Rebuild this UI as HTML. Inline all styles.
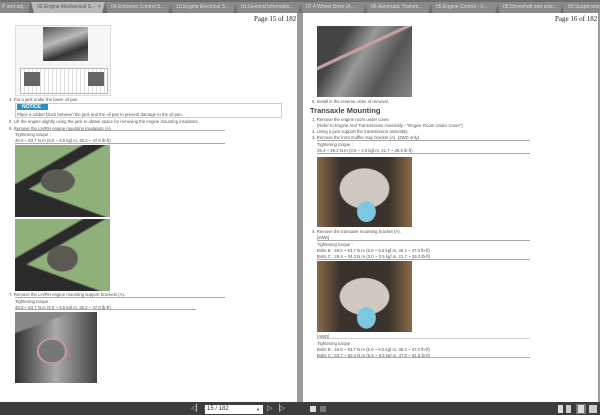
<!DOCTYPE html>
<html><head><meta charset="utf-8"><style>
*{margin:0;padding:0;box-sizing:border-box}
body{width:600px;height:415px;overflow:hidden;background:#9c9c9c;font-family:"Liberation Sans",sans-serif;position:relative}
.a{position:absolute}
.tabs{left:0;top:0;width:600px;height:13px;background:#6e6e6e}
.tab{position:absolute;top:2px;height:11px;background:#8a8a8a;color:#dcdcdc;font-size:5px;line-height:11px;padding-left:6px;white-space:nowrap;overflow:hidden;clip-path:polygon(0 0,100% 0,96% 100%,4% 100%)}
.tab.act{background:#b9b9b9;color:#555}
.page{background:#fff;top:13px;height:389px}
.t{position:absolute;font-size:4.3px;color:#555;white-space:nowrap;line-height:5px}
.pn{position:absolute;font-family:"Liberation Serif",serif;font-size:7px;color:#222;white-space:nowrap}
.ln{position:absolute;height:1px;background:#aaa}
.ph{position:absolute}
.bar{left:0;top:402px;width:600px;height:13px;background:#3d3d3d}
</style></head><body>
<div class="a tabs">
<div class="tab" style="left:-4px;width:34px">P and adj...</div>
<div class="tab act" style="left:31px;width:74px">02.Engine Mechanical S... &nbsp;×</div>
<div class="tab" style="left:105px;width:66px">04.Emission Control S...</div>
<div class="tab" style="left:170px;width:66px">10.Engine Electrical S...</div>
<div class="tab" style="left:235px;width:66px">01.General Informatio...</div>
<div class="tab" style="left:300px;width:66px">07.4 Wheel Drive (A...</div>
<div class="tab" style="left:365px;width:66px">06.Automatic Transm...</div>
<div class="tab" style="left:430px;width:68px">05.Engine Control - F...</div>
<div class="tab" style="left:497px;width:66px">08.Driveshaft and axle...</div>
<div class="tab" style="left:562px;width:44px">09.Suspension</div>
</div>

<div class="a page" style="left:0;width:297px">
<div class="pn" style="left:254px;top:2px">Page 15 of 182</div>
<div class="ph" style="left:15px;top:12px;width:96px;height:71px;border:1px solid #ddd;background:#f6f6f6">
 <div class="a" style="left:27px;top:1px;width:45px;height:34px;background:linear-gradient(160deg,#555,#bbb 40%,#333 70%,#777)"></div>
 <div class="a" style="left:4px;top:42px;width:88px;height:26px;border:1px solid #bbb;background:repeating-linear-gradient(90deg,#fff 0 3px,#ddd 3px 4px)"></div>
 <div class="a" style="left:8px;top:46px;width:16px;height:14px;background:#666"></div>
 <div class="a" style="left:72px;top:46px;width:16px;height:14px;background:#666"></div>
</div>
<div class="t" style="left:9px;top:84px">4. Put a jack under the lower oil pan.</div>
<div class="a" style="left:15px;top:90px;width:267px;height:15px;border:1px solid #ccc"></div>
<div class="a" style="left:17px;top:91px;width:31px;height:6px;background:#2f8fc4;color:#fff;font-size:5px;line-height:6px;font-weight:bold;padding-left:5px">NOTICE</div>
<div class="t" style="left:17px;top:99px">Place a rubber block between the jack and the oil pan to prevent damage to the oil pan.</div>
<div class="t" style="left:9px;top:106px">5. Lift the engine slightly using the jack to obtain space for removing the engine mounting insulators.</div>
<div class="t" style="left:9px;top:113px">6. Remove the LH/RH engine mounting insulators (A).</div>
<div class="ln" style="left:15px;top:117px;width:210px"></div>
<div class="t" style="left:15px;top:119px">Tightening torque :</div>
<div class="t" style="left:15px;top:125px">49.0 ~ 63.7 N.m (5.0 ~ 6.5 kgf.m, 36.2 ~ 47.0 lb-ft)</div>
<div class="ln" style="left:15px;top:130px;width:210px"></div>
<div class="ph" style="left:15px;top:132px;width:95px;height:72px;background:radial-gradient(ellipse at 45% 50%,#5a5a52 0 22%,transparent 24%),linear-gradient(150deg,transparent 30%,#2a2a2a 32% 40%,transparent 42%),linear-gradient(20deg,#2a2a2a 0 30%,transparent 32%),#8fb07a"></div>
<div class="ph" style="left:15px;top:206px;width:95px;height:72px;background:radial-gradient(ellipse at 50% 55%,#5a5a52 0 22%,transparent 24%),linear-gradient(150deg,transparent 30%,#2a2a2a 32% 40%,transparent 42%),linear-gradient(20deg,#2a2a2a 0 28%,transparent 30%),#8fb07a"></div>
<div class="t" style="left:9px;top:279px">7. Remove the LH/RH engine mounting support brackets (A).</div>
<div class="ln" style="left:15px;top:284px;width:210px"></div>
<div class="t" style="left:15px;top:286px">Tightening torque :</div>
<div class="t" style="left:15px;top:292px">49.0 ~ 63.7 N.m (5.0 ~ 6.5 kgf.m, 36.2 ~ 47.0 lb-ft)</div>
<div class="ln" style="left:15px;top:296px;width:181px"></div>
<div class="ph" style="left:15px;top:299px;width:82px;height:71px;background:linear-gradient(160deg,#888 0 20%,transparent 22%),radial-gradient(ellipse at 45% 55%,#777 0 20%,#c89a9a 21% 23%,transparent 24%),linear-gradient(90deg,#333,#aaa 50%,#444)"></div>
</div>

<div class="a page" style="left:303px;width:295px">
<div class="pn" style="left:252px;top:2px">Page 16 of 182</div>
<div class="ph" style="left:14px;top:13px;width:95px;height:71px;background:linear-gradient(155deg,transparent 35%,#c9a0a0 36% 38%,transparent 39%),linear-gradient(120deg,#444 0 25%,#999 45%,#555 70%,#888)"></div>
<div class="t" style="left:9px;top:86px">5. Install in the reverse order of removal.</div>
<div class="a" style="left:7px;top:93px;font-size:7.5px;font-weight:bold;color:#444">Transaxle Mounting</div>
<div class="t" style="left:9px;top:104px">1. Remove the engine room under cover.</div>
<div class="t" style="left:14px;top:110px">(Refer to Engine And Transmission Assembly - "Engine Room Under Cover")</div>
<div class="t" style="left:9px;top:116px">2. Using a jack support the transmission assembly.</div>
<div class="t" style="left:9px;top:122px">3. Remove the front muffler stay bracket (A). (2WD only)</div>
<div class="ln" style="left:14px;top:127px;width:213px"></div>
<div class="t" style="left:14px;top:129px">Tightening torque :</div>
<div class="t" style="left:14px;top:135px">29.4 ~ 39.2 N.m (3.0 ~ 4.0 kgf.m, 21.7 ~ 28.9 lb-ft)</div>
<div class="ln" style="left:14px;top:140px;width:213px"></div>
<div class="ph" style="left:14px;top:144px;width:95px;height:70px;background:radial-gradient(ellipse at 52% 78%,#7cc8e0 0 13%,transparent 14%),radial-gradient(ellipse at 50% 45%,#cfc9c2 0 36%,transparent 38%),linear-gradient(90deg,#8a6a48,#3a322c 25% 75%,#8a6a48)"></div>
<div class="t" style="left:9px;top:216px">4. Remove the transaxle mounting bracket (A).</div>
<div class="t" style="left:14px;top:222px">[2WD]</div>
<div class="ln" style="left:14px;top:227px;width:213px"></div>
<div class="t" style="left:14px;top:229px">Tightening torque :</div>
<div class="t" style="left:14px;top:235px">Bolts B : 49.0 ~ 63.7 N.m (5.0 ~ 6.5 kgf.m, 36.2 ~ 47.0 lb-ft)</div>
<div class="t" style="left:14px;top:241px">Bolts C : 29.4 ~ 34.3 N.m (3.0 ~ 3.5 kgf.m, 21.7 ~ 25.3 lb-ft)</div>
<div class="ln" style="left:14px;top:246px;width:213px"></div>
<div class="ph" style="left:14px;top:248px;width:95px;height:71px;background:radial-gradient(ellipse at 52% 80%,#7cc8e0 0 13%,transparent 14%),radial-gradient(ellipse at 50% 50%,#cfc9c2 0 36%,transparent 38%),linear-gradient(90deg,#8a6a48,#3a322c 25% 75%,#8a6a48)"></div>
<div class="t" style="left:14px;top:321px">[AWD]</div>
<div class="ln" style="left:14px;top:325px;width:213px;background:#ccc"></div>
<div class="t" style="left:14px;top:328px">Tightening torque :</div>
<div class="t" style="left:14px;top:334px">Bolts B : 49.0 ~ 63.7 N.m (5.0 ~ 6.5 kgf.m, 36.2 ~ 47.0 lb-ft)</div>
<div class="t" style="left:14px;top:340px">Bolts C : 63.7 ~ 83.4 N.m (6.5 ~ 8.5 kgf.m, 47.0 ~ 61.5 lb-ft)</div>
<div class="ln" style="left:14px;top:344px;width:213px"></div>
</div>

<div class="a bar">
<div class="a" style="left:191px;top:3px;color:#ccc;font-size:7px;line-height:7px">◁▏ ◁</div>
<div class="a" style="left:205px;top:3px;width:58px;height:9px;background:#fff;font-size:6px;line-height:9px;color:#333;padding-left:2px">15 / 182<span style="position:absolute;right:3px;font-size:4px">▼</span></div>
<div class="a" style="left:267px;top:3px;color:#ccc;font-size:7px;line-height:7px">▷ ▕▷</div>
<div class="a" style="left:310px;top:4px;width:6px;height:6px;background:#ddd"></div>
<div class="a" style="left:320px;top:4px;width:6px;height:6px;background:#777"></div>
<div class="a" style="left:558px;top:3px;width:5px;height:8px;background:#ddd"></div>
<div class="a" style="left:566px;top:3px;width:5px;height:8px;background:#ccc"></div>
<div class="a" style="left:576px;top:2px;width:10px;height:10px;background:#777"></div>
<div class="a" style="left:578px;top:3px;width:6px;height:8px;background:#ddd"></div>
<div class="a" style="left:589px;top:3px;width:8px;height:8px;background:#ccc"></div>
</div>
</body></html>
